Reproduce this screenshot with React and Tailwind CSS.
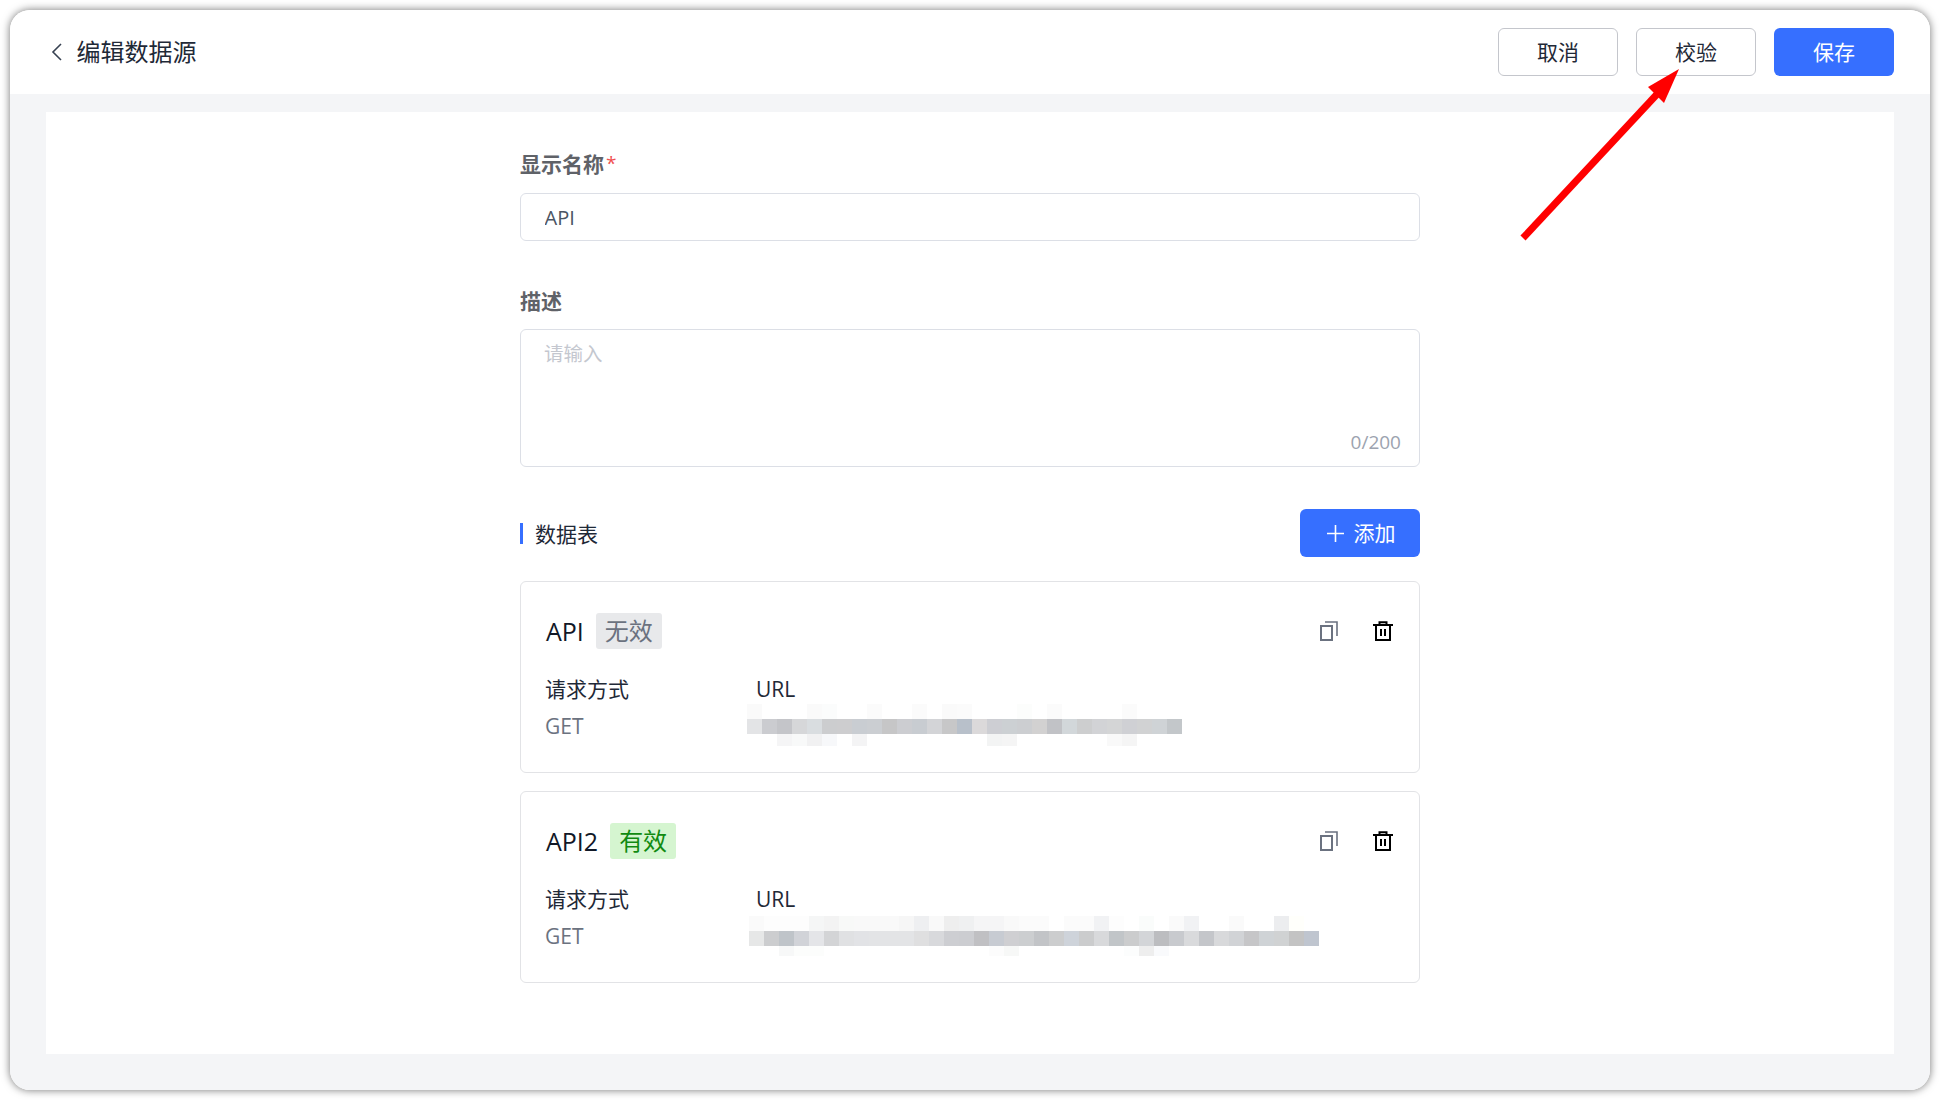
const M1 = "e3e4e6 cbccd0 c4c5c9 d6d7d9 d9dde0 cccdcf cdcdcf c9cdd2 cbced2 c6c6c7 cccdd1 c8ccd1 d3d4d7 c7c7c8 b8c0ca dbd9da cdced3 ccd0d3 ccced1 d2d1d1 c1c2c6 d2d7da cdcecf d2d3d6 d4d5d6 cfd0d4 d1d2d3 cfd3d6 c3c7ca".split(" ");
const T1 = { 0: "fafafa", 4: "fafafa", 5: "fbfcfc", 8: "fbfbfb", 11: "fbfbfb", 13: "fafafa", 14: "fbfbfb", 18: "fcfdfc", 20: "fbfbfb", 25: "fbfbfb" };
const B1 = { 2: "f5f5f6", 3: "f8f9f9", 4: "f1f1f2", 5: "f7f8fa", 7: "f4f4f5", 16: "f3f4f4", 17: "f5f5f5", 24: "f9f9f9", 25: "f5f5f5" };
const M2 = "e6e7e7 cccdcf bfc4c9 d1d3d8 e4e5e8 d3d4d6 e0e1e3 e2e3e6 e3e4e6 e3e4e6 e3e4e6 dfdfe0 d8d9dc cdced2 cccdd1 c0c0c3 c7cbd2 cfcfd2 ccced0 c2c4c7 cccdce ced3da cbcccd d8d9db c1c5c8 cbcccd d3d5d8 bcbdc0 c8cace d9dadc c4c6ca d8d9db d1d3d6 c6c6c8 cfd3d6 d0d2d3 c3c3c3 bfc5cf".split(" ");
const T2 = { 0: "fafafa", 1: "fdfdfd", 2: "fdfdfd", 3: "fdfdfd", 4: "f5f6f6", 5: "f3f3f3", 6: "f8f9f8", 7: "f9f9f9", 8: "f9f9f9", 9: "f9f9f9", 10: "f6f6f6", 11: "eeeff1", 12: "f9f9f9", 13: "eeeeee", 14: "eff0f1", 15: "f5f5f6", 16: "f5f5f6", 17: "f9f9f9", 18: "fbfbfb", 19: "fbfbfb", 21: "fbfbfb", 22: "fbfbfb", 23: "f1f2f4", 24: "fdfdfd", 26: "fafcfb", 28: "fafafa", 29: "f1f2f4", 32: "fafafa", 35: "ecedef", 36: "fffffb" };
const B2 = { 2: "f7f8f8", 3: "fcfdfc", 4: "fcfdfc", 16: "fcfcfc", 17: "f7f8f7", 25: "fcfdfd", 26: "eeeeee", 27: "f9fafc" };

function Mosaic({ main, top, bottom, topH, bottomH, className }) {
  const w = main.length * 15;
  const h = topH + 15 + bottomH;
  return (
    <svg width={w} height={h} viewBox={`0 0 ${w} ${h}`} shapeRendering="crispEdges" className={className}>
      {Object.entries(top).map(([i, c]) => <rect key={"t" + i} x={i * 15} y={0} width={15} height={topH} fill={"#" + c} />)}
      {main.map((c, i) => <rect key={"m" + i} x={i * 15} y={topH} width={15} height={15} fill={"#" + c} />)}
      {Object.entries(bottom).map(([i, c]) => <rect key={"b" + i} x={i * 15} y={topH + 15} width={15} height={bottomH} fill={"#" + c} />)}
    </svg>
  );
}

function CopyIcon() {
  return (
    <svg width="18" height="20" viewBox="0 0 18 20" fill="none" stroke="#6b7280" strokeWidth="2">
      <rect x="1" y="5" width="11" height="14" />
      <path d="M5 1H17V15" strokeWidth="1.6" />
    </svg>
  );
}

function TrashIcon() {
  return (
    <svg width="20" height="20" viewBox="0 0 20 20" fill="none" stroke="#000" strokeWidth="2">
      <path d="M0 4H20" />
      <path d="M6.5 3V1.2H13.5V3" />
      <path d="M3 4V19H17V4" />
      <path d="M8 8V15M12 8V15" />
    </svg>
  );
}

function DataCard({ name, badge, badgeClass, mosaic }) {
  return (
    <div className="h-[192px] rounded-[6px] border border-[#e2e3e6] pl-[25px] pr-[26px] pt-[31px]">
      <div className="flex h-[36px] items-center justify-between">
        <div className="flex items-center gap-[12px]">
          <span className="text-[25px] leading-[36px] text-[#111827]">{name}</span>
          <span className={`h-[36px] rounded-[3px] px-[9px] text-[24px] leading-[36px] ${badgeClass}`}>{badge}</span>
        </div>
        <div className="flex items-center gap-[35px]">
          <CopyIcon />
          <TrashIcon />
        </div>
      </div>
      <div className="mt-[25px] flex">
        <div className="ml-[-1px] w-[211px] text-[21px] leading-[30px]">
          <div className="text-[#1f2937]">请求方式</div>
          <div className="mt-[7px] text-[#6b7280]">GET</div>
        </div>
        <div className="text-[21px] leading-[30px]">
          <div className="text-[#1f2937]">URL</div>
          {mosaic}
        </div>
      </div>
    </div>
  );
}

export default function App() {
  return (
    <div className="relative h-[1100px] w-[1940px] overflow-hidden bg-white p-[10px] font-['Open_Sans','Noto_Sans_CJK_SC',sans-serif]">
      <div className="flex h-full flex-col overflow-hidden rounded-[20px] shadow-[0_0_8px_rgba(0,0,0,0.55)]">
        <header className="flex h-[84px] shrink-0 items-center justify-between bg-white pl-[41px] pr-[36px]">
          <div className="flex items-center gap-[14.5px]">
            <svg width="11" height="18" viewBox="0 0 11 18" fill="none" stroke="#374151" strokeWidth="1.6">
              <path d="M10 1L2 9L10 17" />
            </svg>
            <span className="text-[24px] leading-[32px] text-[#1f2937]">编辑数据源</span>
          </div>
          <div className="flex items-center gap-[18px]">
            <button className="h-[48px] w-[120px] rounded-[6px] border border-[#c4c6cc] bg-white pt-[2px] text-[21px] text-[#1f2937]">取消</button>
            <button className="h-[48px] w-[120px] rounded-[6px] border border-[#c4c6cc] bg-white pt-[2px] text-[21px] text-[#1f2937]">校验</button>
            <button className="h-[48px] w-[120px] rounded-[6px] bg-[#366fff] pt-[2px] text-[21px] text-white">保存</button>
          </div>
        </header>
        <main className="flex min-h-0 flex-1 flex-col bg-[#f4f5f7] px-[36px] pb-[36px] pt-[18px]">
          <div className="flex flex-1 justify-center bg-white pt-[37px]">
            <div className="w-[900px]">
              <div className="h-[30px] text-[21px] font-bold leading-[30px] text-[#5f6268]">
                显示名称<span className="ml-[2px] align-[2px] text-[19px] font-normal leading-none text-[#f05050]">*</span>
              </div>
              <input
                readOnly
                value="API"
                className="mt-[14px] block h-[48px] w-full rounded-[6px] border border-[#dcdfe6] px-[23.5px] text-[20px] text-[#4b5563] outline-none"
              />
              <div className="mt-[45px] text-[21px] font-bold leading-[30px] text-[#5f6268]">描述</div>
              <div className="relative mt-[13px] h-[138px]">
                <textarea
                  readOnly
                  placeholder="请输入"
                  className="block h-full w-full resize-none rounded-[6px] border border-[#dcdfe6] px-[23px] py-[9px] text-[19.5px] leading-[30px] outline-none placeholder:text-[#c4c7cf]"
                />
                <span className="absolute bottom-[10px] right-[19px] text-[19px] leading-[30px] text-[#9ca3af]">0/200</span>
              </div>
              <div className="mt-[42px] flex h-[48px] items-center justify-between">
                <div className="flex items-center gap-[12px]">
                  <span className="block h-[21px] w-[3px] bg-[#366fff]" />
                  <span className="pt-[2px] text-[21px] leading-[30px] text-[#1f2937]">数据表</span>
                </div>
                <button className="flex h-[48px] w-[120px] items-center justify-center gap-[10px] rounded-[6px] bg-[#366fff] pl-[2px] text-[21px] text-white">
                  <svg width="17" height="17" viewBox="0 0 17 17" fill="none" stroke="#fff" strokeWidth="1.6">
                    <path d="M8.5 0V17M0 8.5H17" />
                  </svg>
                  <span className="pt-[2px]">添加</span>
                </button>
              </div>
              <div className="mt-[24px] flex flex-col gap-[18px]">
                <DataCard
                  name="API"
                  badge="无效"
                  badgeClass="bg-[#e8e9eb] text-[#6b7280]"
                  mosaic={<Mosaic main={M1} top={T1} bottom={B1} topH={15} bottomH={12} className="ml-[-9px] block" />}
                />
                <DataCard
                  name="API2"
                  badge="有效"
                  badgeClass="bg-[#d5f5d0] text-[#118a11]"
                  mosaic={<Mosaic main={M2} top={T2} bottom={B2} topH={15} bottomH={10} className="ml-[-7px] mt-[2px] block" />}
                />
              </div>
            </div>
          </div>
        </main>
      </div>
      <svg className="pointer-events-none absolute left-0 top-0" width="1940" height="1100" fill="none">
        <path d="M1523 238L1660 91" stroke="#ff0000" strokeWidth="7" />
        <path d="M1679 69L1648 87L1664 103Z" fill="#ff0000" />
      </svg>
    </div>
  );
}
